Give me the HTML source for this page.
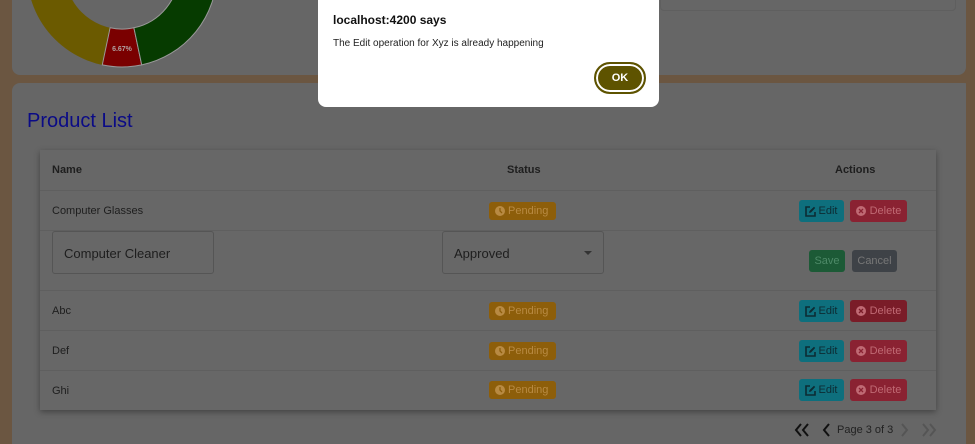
<!DOCTYPE html>
<html><head><style>
*{box-sizing:border-box;margin:0;padding:0}
html,body{width:975px;height:444px;overflow:hidden}
body{background:#6b5641;font-family:"Liberation Sans",sans-serif;position:relative}
.card{position:absolute;background:#666;border-radius:8px}
.tbl{position:absolute;left:40px;top:150px;width:896px;height:260px;background:#676767;box-shadow:0 2px 6px rgba(0,0,0,.35)}
.row{position:absolute;left:0;width:896px;border-bottom:1px solid #5f5f5f;font-size:11px;color:#1e1e1e}
.cell{position:absolute;top:50%;transform:translateY(-50%)}
.badge{position:absolute;left:449px;width:67px;height:18px;background:#8d5e0a;border-radius:3px;color:#b88a42;font-size:11px;line-height:18px;padding-left:19px}
.badge svg{position:absolute;left:6px;top:4px}
.btn{position:absolute;height:22px;border-radius:3px;font-size:11px;line-height:22px;text-align:center}
.edit{left:759px;width:45px;background:#0e6f7d;color:#0d2b33;padding-left:13px}
.del{left:810px;width:57px;background:#8a2232;color:#c06a74;padding-left:14px}
.btn svg{position:absolute;left:6px;top:6px}
</style></head><body>
<div class="card" style="left:12px;top:-10px;width:954px;height:85px"></div>
<div style="position:absolute;left:660px;top:-5px;width:296px;height:16px;border:1px solid #5f5f5f;border-radius:4px"></div>
<svg style="position:absolute;left:0;top:0" width="320" height="80">
<g transform="translate(122,-28)">
<circle r="76" fill="none" stroke="#6b5a00" stroke-width="38"/>
<path d="M19.7 92.9 A95 95 0 0 1 -19.7 92.9 L-11.9 55.8 A57 57 0 0 0 11.9 55.8Z" fill="#7a0000" stroke="#999" stroke-width="1"/>
<path d="M95 0 A95 95 0 0 1 19.7 92.9 L11.9 55.8 A57 57 0 0 0 57 0Z" fill="#063b00" stroke="#999" stroke-width="1"/>
</g>
<text x="122" y="51" font-size="7" fill="#b0a0a0" text-anchor="middle" font-weight="bold" font-family="Liberation Sans">6.67%</text>
</svg>
<div class="card" style="left:12px;top:83px;width:960px;height:370px"></div>
<div style="position:absolute;left:966px;top:0;width:9px;height:444px;background:#6b5641"></div>
<div style="position:absolute;left:27px;top:110px;font-size:20px;color:#0b0b86">Product List</div>
<div class="tbl">
 <div class="row" style="top:0;height:41px;font-weight:bold"><span class="cell" style="left:12px">Name</span><span class="cell" style="left:467px">Status</span><span class="cell" style="left:795px">Actions</span></div>
 <div class="row" style="top:41px;height:40px"><span class="cell" style="left:12px">Computer Glasses</span><div class="badge" style="top:11px"><svg width="10" height="10"><circle cx="5" cy="5" r="5" fill="#b88a42"/><path d="M5 2V5L7 7" stroke="#8d5e0a" stroke-width="1.3" fill="none"/></svg>Pending</div><div class="btn edit" style="top:9px"><svg width="11" height="11"><path d="M5 1H1V10H10V6" stroke="#0d2b33" stroke-width="1.6" fill="none"/><path d="M4 7L4.5 5L9 0.8L10.2 2L6 6.5Z" fill="#0d2b33"/></svg>Edit</div><div class="btn del" style="top:9px"><svg width="10" height="10"><circle cx="5" cy="5" r="5" fill="#c06a74"/><path d="M3 3L7 7M7 3L3 7" stroke="#8a2232" stroke-width="1.3"/></svg>Delete</div></div>
 <div class="row" style="top:81px;height:60px">
  <div style="position:absolute;left:12px;top:0;width:162px;height:43px;border:1px solid #555;border-radius:3px;font-size:13px;padding:14px 11px">Computer Cleaner</div>
  <div style="position:absolute;left:402px;top:0;width:162px;height:43px;border:1px solid #555;border-radius:3px;font-size:13px;padding:14px 11px">Approved<span style="position:absolute;right:11px;top:19px;border:4px solid transparent;border-top:4px solid #333;border-bottom:0"></span></div>
  <div class="btn" style="left:769px;top:19px;width:36px;background:#1c5a36;color:#4e8a68">Save</div>
  <div class="btn" style="left:812px;top:19px;width:45px;background:#3e4247;color:#777">Cancel</div>
 </div>
 <div class="row" style="top:141px;height:40px"><span class="cell" style="left:12px">Abc</span><div class="badge" style="top:11px"><svg width="10" height="10"><circle cx="5" cy="5" r="5" fill="#b88a42"/><path d="M5 2V5L7 7" stroke="#8d5e0a" stroke-width="1.3" fill="none"/></svg>Pending</div><div class="btn edit" style="top:9px"><svg width="11" height="11"><path d="M5 1H1V10H10V6" stroke="#0d2b33" stroke-width="1.6" fill="none"/><path d="M4 7L4.5 5L9 0.8L10.2 2L6 6.5Z" fill="#0d2b33"/></svg>Edit</div><div class="btn del" style="top:9px;background:#7a1c28"><svg width="10" height="10"><circle cx="5" cy="5" r="5" fill="#c06a74"/><path d="M3 3L7 7M7 3L3 7" stroke="#7a1c28" stroke-width="1.3"/></svg>Delete</div></div>
 <div class="row" style="top:181px;height:40px"><span class="cell" style="left:12px">Def</span><div class="badge" style="top:11px"><svg width="10" height="10"><circle cx="5" cy="5" r="5" fill="#b88a42"/><path d="M5 2V5L7 7" stroke="#8d5e0a" stroke-width="1.3" fill="none"/></svg>Pending</div><div class="btn edit" style="top:9px"><svg width="11" height="11"><path d="M5 1H1V10H10V6" stroke="#0d2b33" stroke-width="1.6" fill="none"/><path d="M4 7L4.5 5L9 0.8L10.2 2L6 6.5Z" fill="#0d2b33"/></svg>Edit</div><div class="btn del" style="top:9px"><svg width="10" height="10"><circle cx="5" cy="5" r="5" fill="#c06a74"/><path d="M3 3L7 7M7 3L3 7" stroke="#8a2232" stroke-width="1.3"/></svg>Delete</div></div>
 <div class="row" style="top:221px;height:39px;border:0"><span class="cell" style="left:12px">Ghi</span><div class="badge" style="top:10px"><svg width="10" height="10"><circle cx="5" cy="5" r="5" fill="#b88a42"/><path d="M5 2V5L7 7" stroke="#8d5e0a" stroke-width="1.3" fill="none"/></svg>Pending</div><div class="btn edit" style="top:8px"><svg width="11" height="11"><path d="M5 1H1V10H10V6" stroke="#0d2b33" stroke-width="1.6" fill="none"/><path d="M4 7L4.5 5L9 0.8L10.2 2L6 6.5Z" fill="#0d2b33"/></svg>Edit</div><div class="btn del" style="top:8px"><svg width="10" height="10"><circle cx="5" cy="5" r="5" fill="#c06a74"/><path d="M3 3L7 7M7 3L3 7" stroke="#8a2232" stroke-width="1.3"/></svg>Delete</div></div>
</div>
<svg style="position:absolute;left:794px;top:423px" width="16" height="14"><path d="M7 1L2 7L7 13M14 1L9 7L14 13" stroke="#111" stroke-width="2" fill="none"/></svg>
<svg style="position:absolute;left:821px;top:423px" width="10" height="14"><path d="M8 1L3 7L8 13" stroke="#111" stroke-width="2" fill="none"/></svg>
<div style="position:absolute;left:837px;top:424px;font-size:11px;color:#222">Page 3 of 3</div>
<svg style="position:absolute;left:900px;top:423px" width="10" height="14"><path d="M2 1L7 7L2 13" stroke="#555" stroke-width="2" fill="none"/></svg>
<svg style="position:absolute;left:921px;top:423px" width="16" height="14"><path d="M2 1L7 7L2 13M9 1L14 7L9 13" stroke="#555" stroke-width="2" fill="none"/></svg>
<div style="position:absolute;left:318px;top:-8px;width:341px;height:115px;background:#fff;border-radius:8px">
 <div style="position:absolute;left:15px;top:21px;font-size:12px;font-weight:bold;color:#111">localhost:4200 says</div>
 <div style="position:absolute;left:15px;top:46px;font-size:10px;color:#222">The Edit operation for Xyz is already happening</div>
 <div style="position:absolute;left:276px;top:70px;width:52px;height:32px;border-radius:16px;background:#5e5300;border:2px solid #5e5300;box-shadow:inset 0 0 0 2px #fff;color:#fff;font-size:11px;font-weight:bold;text-align:center;line-height:28px">OK</div>
</div>
</body></html>
